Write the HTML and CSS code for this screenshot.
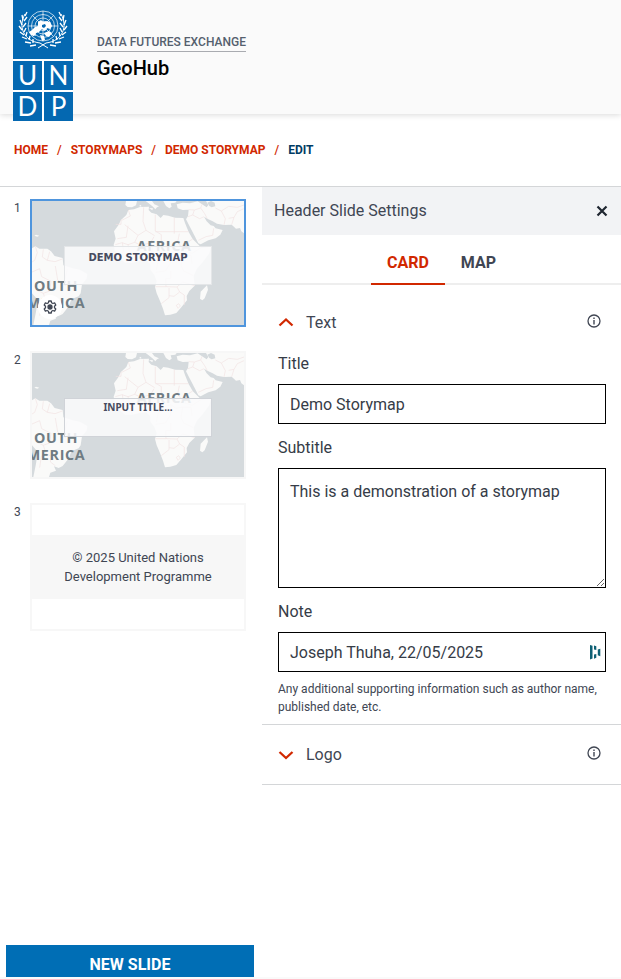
FILE: index.html
```html
<!DOCTYPE html>
<html lang="en">
<head>
<meta charset="utf-8">
<meta name="viewport" content="width=device-width, initial-scale=1">
<title>Edit storymap - GeoHub</title>
<link rel="stylesheet" href="styles.css">
</head>
<body>
<svg class="defs" aria-hidden="true">
  <symbol id="world" viewBox="96 33 636 372" preserveAspectRatio="none">
    <rect x="96" y="33" width="636" height="372" fill="#d5dadd"/>
    <g fill="#fafaf9">
      <path d="M378 33H411L408 46 396 52 383 51 376 45ZM437 33H456L463 43 477 49 471 52 466 58 459 50 446 40ZM490 33H530L526 38 512 40 515 50 508 55 498 48ZM447 54L459 55 457 61ZM417 48L423 44 424 50Z"/>
      <path d="M385 60 402 58 420 51 447 50 446 60 454 68 470 73 482 84 490 75 505 77 525 83 550 84 555 99 566 126 578 147 596 165 604 173 633 170 628 190 608 217 591 236 581 257 584 287 568 303 560 318 561 331 544 352 529 369 511 374 495 376 489 356 480 333 470 310 465 291 470 274 463 255 451 239 450 221 438 211 419 213 397 218 375 218 358 204 344 181 341 164 347 146 342 124 355 106 363 90 379 75Z"/>
      <path d="M530 43 548 38 570 40 593 34 606 43 620 52 625 45 618 33H732V130L724 124 720 114 708 116 695 104 672 105 651 101 638 94 622 86 612 80 620 94 632 106 641 108 647 115 668 120 661 134 647 145 625 151 602 163 595 160 584 138 568 107 558 88 564 78 566 59 548 60 533 55Z"/>
      <path d="M621 286 624 299 614 325 607 331 600 326 602 305Z"/>
      <path d="M96 175 106 169 118 176 142 176 153 184 164 198 188 204 190 226 218 235 240 239 262 252 260 266 246 283 242 310 236 319 214 328 207 348 188 372 176 378 162 373 168 386 151 392 147 405H100L108 365 113 329 96 310Z"/>
      <path d="M103 137 108 134 118 137 112 140Z"/>
    </g>
    <path d="M622 38 633 33 644 38 646 49 635 52 628 48Z" fill="#d5dadd"/>
    <g fill="none" stroke="#f1e2e3" stroke-width="2">
      <path d="M385 60 391 78 365 91M363 90V103H347M374 104 414 136 438 121 429 94 431 52M438 121 464 137M466 74V123L484 134M523 83V131M466 125H566M384 107 379 142 352 146M414 136 404 157 384 164 366 158 346 164M404 157 424 166 452 158 462 140M452 158 458 177 448 203M484 134V165L473 179 486 195 513 188 528 199 548 195M538 131 533 156 552 184M578 147 558 160 555 183 576 190 603 173M486 195 474 216 469 240M513 188 512 218 496 243 467 247M548 195 543 226 551 243 580 257M512 243V265L497 266 498 290H466M498 290 531 291 548 276 584 287M507 294V323L484 341M507 317 522 319 539 306 553 315 553 345M531 291 539 306M548 196H573L576 222M529 346L536 341 541 348 534 355ZM358 204 371 183 367 158M384 164 390 190 397 218M424 166 422 212"/>
      <path d="M566 59 583 60 602 54 606 43M583 60 578 75 564 80M578 75 599 86 612 80M602 54 614 71 622 86M595 151 618 140 638 136 641 115M672 105 676 86 664 63 646 54M664 63 686 49 712 52 732 45M686 85 702 82 712 65 732 56M695 104 702 82"/>
      <path d="M106 169 112 188 104 211 96 216M130 178 127 201 142 211 149 185M142 211 165 215 187 207M96 246 119 236 125 260 153 274 149 303 130 310 111 301M130 310 138 335 154 343 151 360 166 371M138 335 124 342 119 377M166 228 173 270 196 286M202 238 193 272"/>
    </g>
    <g class="map-label">
      <text x="410" y="183">AFRICA</text>
      <text x="102" y="303">OUTH</text>
      <text x="80" y="354">MERICA</text>
    </g>
  </symbol>
  <symbol id="info" viewBox="0 0 14 14">
    <circle cx="7" cy="7" r="6" fill="none" stroke="currentColor" stroke-width="1.3"/>
    <path d="M6.3 3.6h1.4v1.4H6.3zM6.3 6.1h1.4v4.3H6.3z" fill="currentColor"/>
  </symbol>
</svg>

<header class="site-header">
  <a class="logo" href="#" aria-label="UNDP">
    <span class="logo-emblem">
      <svg viewBox="0 0 60 59" fill="none" stroke="#fff">
        <g stroke-width=".7">
          <circle cx="30" cy="26" r="15"/><circle cx="30" cy="26" r="11.5"/><circle cx="30" cy="26" r="8"/><circle cx="30" cy="26" r="4.5"/>
          <path d="M30 11V41M15 26H45M19.400 15.400 40.600 36.600M40.600 15.400 19.400 36.600"/>
        </g>
        <path fill="#fff" stroke="none" d="M25 22l3-2 2 2 3-1 4 1 2 4-2 3-3-1-2 3-3-2-3 3-3 1-2 3-3-1-2-3 3-2 3-3 3-1zM31 33l5-2 3 2-3 4-3-1zM27 35l4 1 1 4-3 1zM18 31l3 0 2 5-3-1z"/>
        <path fill="#0468b1" stroke="none" d="M29 25l3-1 1 2-2 2-2-1z"/>
        <g stroke-width="1">
          <path d="M12 14C5 26 10 41 27 43L35 48M48 14C55 26 50 41 33 43L25 48"/>
        </g>
        <path stroke-width="1.300" d="M12 16l2-4M10 20l-1-5M11 21l3-4M9 25l-2-5M10 27l3-4M9 30l-3-4M11 32l2-4M11 35l-4-3M13 36l1-4M14 39l-5-2M16 40l1-4M18 43l-6-1M20 43l0-4M23 45l-6 1M48 16l-2-4M50 20l1-5M49 21l-3-4M51 25l2-5M50 27l-3-4M51 30l3-4M49 32l-2-4M49 35l4-3M47 36l-1-4M46 39l5-2M44 40l-1-4M42 43l6-1M40 43l0-4M37 45l6 1"/>
      </svg>
    </span>
    <span class="logo-letter">U</span><span class="logo-letter">N</span><span class="logo-letter">D</span><span class="logo-letter">P</span>
  </a>
  <div class="site-title">
    <a class="site-parent" href="#">DATA FUTURES EXCHANGE</a>
    <a class="site-name" href="#">GeoHub</a>
  </div>
</header>

<nav class="breadcrumb" aria-label="Breadcrumb">
  <a href="#">HOME</a><span class="sep">/</span><a href="#">STORYMAPS</a><span class="sep">/</span><a href="#">DEMO STORYMAP</a><span class="sep">/</span><span class="current">EDIT</span>
</nav>

<main class="editor">
  <aside class="sidebar">
    <ol class="slides">
      <li class="slide">
        <span class="slide-number">1</span>
        <div class="preview preview-active">
          <svg class="map"><use href="#world"/></svg>
          <div class="card card-wide">DEMO STORYMAP</div>
          <button class="gear" type="button" aria-label="Slide settings">
            <svg viewBox="0 0 14 14" fill="none" stroke="currentColor" stroke-width="1.300" stroke-linejoin="round">
              <path d="M5.800 1h2.400l.4 1.800 1.300.7 1.700-.6 1.200 2.100-1.300 1.200v1.600l1.300 1.200-1.200 2.100-1.700-.6-1.300.7L8.200 13H5.800l-.4-1.800-1.300-.7-1.700.6L1.200 9l1.300-1.200V6.200L1.200 5l1.200-2.100 1.700.6 1.300-.7z"/>
              <circle cx="7" cy="7" r="2" fill="currentColor"/>
            </svg>
          </button>
        </div>
      </li>
      <li class="slide">
        <span class="slide-number">2</span>
        <div class="preview">
          <svg class="map"><use href="#world"/></svg>
          <div class="card">INPUT TITLE...</div>
        </div>
      </li>
      <li class="slide">
        <span class="slide-number">3</span>
        <div class="preview preview-footer">
          <p>© 2025 United Nations Development Programme</p>
        </div>
      </li>
    </ol>
    <button class="new-slide" type="button">NEW SLIDE</button>
  </aside>

  <section class="panel">
    <div class="panel-header">
      <h2>Header Slide Settings</h2>
      <button class="close" type="button" aria-label="Close">
        <svg viewBox="0 0 12 12" fill="none" stroke="currentColor" stroke-width="2.200"><path d="M1.500 1.500l9 9M10.500 1.500l-9 9"/></svg>
      </button>
    </div>
    <div class="tabs" role="tablist">
      <button class="tab tab-active" type="button" role="tab" aria-selected="true">CARD</button>
      <button class="tab" type="button" role="tab" aria-selected="false">MAP</button>
    </div>

    <div class="accordion accordion-open">
      <div class="accordion-head">
        <button class="toggle" type="button" aria-expanded="true">
          <svg viewBox="0 0 16 16" fill="none" stroke="currentColor" stroke-width="2.300"><path d="M1.500 10.500 8 4.500l6.500 6"/></svg>
          <span>Text</span>
        </button>
        <button class="info" type="button" aria-label="About text"><svg><use href="#info"/></svg></button>
      </div>
      <div class="fields">
        <label for="title">Title</label>
        <input id="title" type="text" value="Demo Storymap">
        <label for="subtitle">Subtitle</label>
        <textarea id="subtitle">This is a demonstration of a storymap</textarea>
        <label for="note">Note</label>
        <div class="note-box">
          <input id="note" type="text" value="Joseph Thuha, 22/05/2025">
          <svg class="note-mark" viewBox="0 0 12 16" fill="#0e6074"><path d="M1 1l2.500.8V14.500L1 15.500zM5 1.500l2.300.8V6L5 5.500zM5 10.500l2.300-.6v3.800L5 14.800zM8.800 5.500l2.500-.8v7.500l-2.500-.9z"/></svg>
        </div>
        <p class="help">Any additional supporting information such as author name, published date, etc.</p>
      </div>
    </div>

    <div class="accordion">
      <div class="accordion-head">
        <button class="toggle" type="button" aria-expanded="false">
          <svg viewBox="0 0 16 16" fill="none" stroke="currentColor" stroke-width="2.300"><path d="M1.500 5 8 11l6.500-6"/></svg>
          <span>Logo</span>
        </button>
        <button class="info" type="button" aria-label="About logo"><svg><use href="#info"/></svg></button>
      </div>
    </div>
  </section>
</main>
<footer class="site-footer"></footer>
</body>
</html>
```
FILE: styles.css
```css
* {
  box-sizing: border-box;
}

body {
  margin: 0;
  min-height: 100vh;
  display: flex;
  flex-direction: column;
  background: #fff;
  color: #404653;
  font: 16px/24px Roboto, "Liberation Sans", sans-serif;
}

h2,
p,
ol {
  margin: 0;
  padding: 0;
  font-size: inherit;
  font-weight: 400;
}

a {
  color: inherit;
  text-decoration: none;
}

button {
  margin: 0;
  padding: 0;
  border: 0;
  background: none;
  color: inherit;
  font: inherit;
  cursor: pointer;
}

svg {
  display: block;
}

.defs {
  position: absolute;
  width: 0;
  height: 0;
}

/* Header */
.site-header {
  display: flex;
  align-items: flex-start;
  gap: 24px;
  height: 114px;
  padding-left: 13px;
  background: #fafafa;
  box-shadow: 0 1px 6px rgba(0, 0, 0, 0.15);
}

.logo {
  display: grid;
  grid-template-columns: 29px 29px;
  grid-template-rows: 59px 29px 29px;
  gap: 2px;
  background: #fff;
}

.logo-emblem {
  grid-column: 1 / -1;
  background: #0468b1;
}

.logo-letter {
  background: #0468b1;
  color: #fff;
  font: 26px/29px Lato, sans-serif;
  text-align: center;
}

.site-title {
  display: flex;
  flex-direction: column;
  align-items: flex-start;
  padding-top: 34px;
}

.site-parent {
  border-bottom: 1px solid #a9abb0;
  color: #55606e;
  font-size: 12px;
  font-weight: 500;
  line-height: 17px;
}

.site-name {
  margin-top: 4px;
  color: #000;
  font-size: 20px;
  font-weight: 500;
}

/* Breadcrumb */
.breadcrumb {
  display: flex;
  gap: 9px;
  padding: 24px 14px;
  border-bottom: 1px solid #d4d6d8;
  color: #d12800;
  font-size: 12px;
  font-weight: 700;
}

.sep {
  font-weight: 500;
}

.current {
  color: #003b63;
}

/* Editor */
.editor {
  flex: 1;
  display: grid;
  grid-template-columns: 262px 1fr;
}

.sidebar {
  display: flex;
  flex-direction: column;
  justify-content: space-between;
}

.slides {
  display: flex;
  flex-direction: column;
  gap: 24px;
  padding: 12px 16px 24px 14px;
  list-style: none;
}

.slide {
  display: grid;
  grid-template-columns: 16px 1fr;
}

.slide-number {
  font-size: 12px;
  line-height: 18px;
}

.preview {
  position: relative;
  height: 128px;
  border: 2px solid #f7f7f7;
  overflow: hidden;
}

.preview-active {
  border-color: #4f95dd;
}

.map {
  width: 100%;
  height: 100%;
}

.map-label {
  fill: #6f7c83;
  font: 700 43px "Open Sans", "Noto Sans", sans-serif;
  letter-spacing: 2px;
}

.card {
  position: absolute;
  inset: 45px 15% 40px;
  border: 1px solid #d0d3d8;
  background: rgba(250, 251, 252, 0.88);
  color: #474b60;
  font: 700 10px/16px "Noto Sans", sans-serif;
  text-align: center;
}

.card-wide {
  border-color: #e4e6e8;
  font-family: "DejaVu Sans", sans-serif;
  line-height: 22px;
}

.gear {
  position: absolute;
  left: 6px;
  bottom: 6px;
  display: grid;
  place-items: center;
  width: 24px;
  height: 24px;
  border-radius: 50%;
  background: #fff;
}

.gear svg {
  width: 14px;
  height: 14px;
}

.preview-footer {
  display: flex;
  align-items: center;
}

.preview-footer p {
  width: 100%;
  padding: 13px 24px;
  background: #f7f7f7;
  font-size: 13px;
  line-height: 19px;
  text-align: center;
}

.new-slide {
  height: 32px;
  margin: 0 8px 0 6px;
  padding-top: 8px;
  background: #006eb5;
  color: #fff;
  font-weight: 700;
}

/* Settings panel */
.panel-header {
  display: flex;
  align-items: center;
  justify-content: space-between;
  height: 48px;
  padding: 0 13px 0 12px;
  background: #f2f3f5;
}

.close {
  color: #1f2630;
}

.close svg {
  width: 12px;
  height: 12px;
}

.tabs {
  display: flex;
  justify-content: center;
  height: 50px;
  border-bottom: 2px solid #eee;
}

.tab {
  height: 50px;
  padding: 8px 16px 0;
  border-bottom: 2px solid transparent;
  font-weight: 700;
}

.tab-active {
  border-color: #d12800;
  color: #d12800;
}

.accordion {
  padding: 0 15px 0 16px;
  border-bottom: 1px solid #d4d6d8;
}

.accordion-open {
  padding-top: 8px;
  padding-bottom: 8px;
}

.accordion-head {
  display: flex;
  align-items: center;
  justify-content: space-between;
  height: 59px;
}

.toggle {
  display: flex;
  align-items: center;
  gap: 12px;
}

.toggle svg {
  width: 16px;
  height: 16px;
  color: #d12800;
}

.info {
  padding: 0 5px 4px 0;
}

.info svg {
  width: 14px;
  height: 14px;
}

.fields {
  display: flex;
  flex-direction: column;
}

.fields label {
  margin-bottom: 8px;
  color: #363c47;
}

.fields input,
.fields textarea {
  display: block;
  width: 100%;
  height: 40px;
  margin: 0 0 12px;
  padding: 0 11px;
  border: 1px solid #000;
  border-radius: 0;
  background: #fff;
  color: #363c47;
  font: inherit;
}

.fields textarea {
  height: 120px;
  padding-top: 11px;
  resize: vertical;
}

.note-box {
  position: relative;
}

.fields .note-box input {
  margin-bottom: 8px;
}

.note-mark {
  position: absolute;
  top: 12px;
  right: 5px;
  width: 12px;
  height: 16px;
}

.help {
  font-size: 12px;
  line-height: 18px;
}

.site-footer {
  height: 2px;
  background: #fafafa;
}
```
